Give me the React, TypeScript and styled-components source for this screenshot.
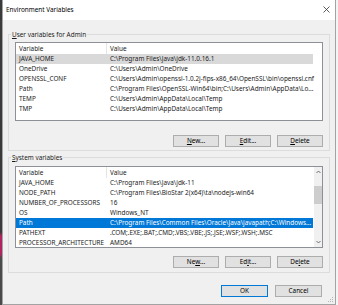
import React from "react";
import styled, { createGlobalStyle } from "styled-components";

const Global = createGlobalStyle`
  *, *::before, *::after { box-sizing: border-box; }
  html, body { margin: 0; padding: 0; background: #f7f7f7; }
  body {
    width: 338px;
    height: 305px;
    overflow: hidden;
    font-family: "Noto Sans", "Open Sans", sans-serif;
    font-size: 6.4px;
    color: #1b1b1b;
  }
`;

const FONT = 6.4;

const Frame = styled.div`
  display: flex;
  width: 338px;
  height: 305px;
`;

const DesktopEdge = styled.div`
  width: 2px;
  flex: none;
  background: linear-gradient(
    to bottom,
    #3a3a3a 0,
    #3a3a3a 232px,
    #b0245f 236px,
    #b0245f 254px,
    #4a4a4a 258px,
    #4a4a4a 100%
  );
`;

const Window = styled.div`
  position: relative;
  width: 334px;
  flex: none;
  display: flex;
  flex-direction: column;
  background: #f0f0f0;
  border-left: 1px solid #a3a3a3;
  border-right: 1px solid #a3a3a3;
  border-bottom: 1px solid #a3a3a3;
`;

const RightEdge = styled.div`
  flex: 1;
  background: #f4f4f4;
`;

const TitleBar = styled.div`
  height: 20px;
  flex: none;
  background: #ffffff;
  display: flex;
  align-items: center;
  justify-content: space-between;
  padding: 0 5px 1px 3px;
  font-size: ${FONT}px;
  color: #000;
`;

const Content = styled.div`
  flex: 1;
  display: flex;
  flex-direction: column;
  padding: 0 5px 0 5px;
`;

const GroupBox = styled.section<{ $mt: number; $pb: number }>`
  display: flex;
  flex-direction: column;
  margin-top: ${(p) => p.$mt}px;
  padding: 0 6px ${(p) => p.$pb}px;
  border: 1px solid #dcdcdc;
`;

const Legend = styled.div`
  align-self: flex-start;
  height: 11px;
  line-height: 11px;
  margin: -6px 0 0 -4px;
  padding: 0 1px;
  background: #f0f0f0;
  white-space: nowrap;
`;

const List = styled.div<{ $h: number; $mt: number }>`
  display: flex;
  height: ${(p) => p.$h}px;
  margin-top: ${(p) => p.$mt}px;
  border: 1px solid #8d9096;
  background: #ffffff;
  overflow: hidden;
`;

const ListBody = styled.div`
  flex: 1;
  min-width: 0;
  display: flex;
  flex-direction: column;
`;

const HeaderRow = styled.div`
  height: 11px;
  flex: none;
  display: grid;
  grid-template-columns: 90px 1px 1fr;
  align-items: stretch;
`;

const HeaderCell = styled.div`
  padding-left: 3px;
  line-height: 11px;
  white-space: nowrap;
`;

const ColSep = styled.div`
  background: #e5e5e5;
`;

type RowState = "none" | "inactive" | "active";

const Row = styled.div<{ $state: RowState }>`
  height: 10px;
  flex: none;
  width: 297px;
  display: grid;
  grid-template-columns: 91px 1fr;
  background: ${(p) =>
    p.$state === "active" ? "#0078d7" : p.$state === "inactive" ? "#d9d9d9" : "transparent"};
  color: ${(p) => (p.$state === "active" ? "#ffffff" : "inherit")};
`;

const Cell = styled.div`
  padding-left: 3px;
  line-height: 10px;
  white-space: nowrap;
`;

const Scrollbar = styled.div`
  width: 8px;
  flex: none;
  display: flex;
  flex-direction: column;
  background: #f0f0f0;
`;

const ScrollArrow = styled.div`
  height: 10px;
  flex: none;
  display: flex;
  align-items: center;
  justify-content: center;
`;

const Track = styled.div`
  flex: 1;
`;

const Thumb = styled.div`
  margin-top: 9px;
  height: 18px;
  background: #cdcdcd;
`;

const ButtonRow = styled.div<{ $mt: number; $gap: number; $pr?: number }>`
  display: flex;
  justify-content: flex-end;
  gap: ${(p) => p.$gap}px;
  margin-top: ${(p) => p.$mt}px;
  padding-right: ${(p) => p.$pr ?? 0}px;
`;

const Button = styled.button<{ $w: number; $primary?: boolean }>`
  width: ${(p) => p.$w}px;
  height: 12px;
  padding: 0;
  margin: 0;
  border: 1px solid ${(p) => (p.$primary ? "#0078d7" : "#adadad")};
  background: #e1e1e1;
  font-family: inherit;
  font-size: ${FONT}px;
  line-height: 10px;
  color: #000;
`;

const Grip = styled.svg`
  position: absolute;
  right: 1px;
  bottom: 1px;
`;

type Var = { name: string; value: string; state?: RowState };

const userVars: Var[] = [
  { name: "JAVA_HOME", value: "C:\\Program Files\\Java\\jdk-11.0.16.1", state: "inactive" },
  { name: "OneDrive", value: "C:\\Users\\Admin\\OneDrive" },
  {
    name: "OPENSSL_CONF",
    value: "C:\\Users\\Admin\\openssl-1.0.2j-fips-x86_64\\OpenSSL\\bin\\openssl.cnf",
  },
  { name: "Path", value: "C:\\Program Files\\OpenSSL-Win64\\bin;C:\\Users\\Admin\\AppData\\Lo..." },
  { name: "TEMP", value: "C:\\Users\\Admin\\AppData\\Local\\Temp" },
  { name: "TMP", value: "C:\\Users\\Admin\\AppData\\Local\\Temp" },
];

const systemVars: Var[] = [
  { name: "JAVA_HOME", value: "C:\\Program Files\\Java\\jdk-11" },
  { name: "NODE_PATH", value: "C:\\Program Files\\BioStar 2(x64)\\ta\\nodejs-win64" },
  { name: "NUMBER_OF_PROCESSORS", value: "16" },
  { name: "OS", value: "Windows_NT" },
  {
    name: "Path",
    value: "C:\\Program Files\\Common Files\\Oracle\\Java\\javapath;C:\\Windows...",
    state: "active",
  },
  { name: "PATHEXT", value: ".COM;.EXE;.BAT;.CMD;.VBS;.VBE;.JS;.JSE;.WSF;.WSH;.MSC" },
  { name: "PROCESSOR_ARCHITECTURE", value: "AMD64" },
];

const Chevron = ({ up }: { up: boolean }) => (
  <svg width="5" height="4" viewBox="0 0 5 4">
    <path
      d={up ? "M0.5 3 L2.5 1 L4.5 3" : "M0.5 1 L2.5 3 L4.5 1"}
      fill="none"
      stroke="#606060"
      strokeWidth="0.9"
    />
  </svg>
);

const VarList = ({
  vars,
  height,
  mt,
  scroll,
}: {
  vars: Var[];
  height: number;
  mt: number;
  scroll?: boolean;
}) => (
  <List $h={height} $mt={mt}>
    <ListBody>
      <HeaderRow>
        <HeaderCell>Variable</HeaderCell>
        <ColSep />
        <HeaderCell>Value</HeaderCell>
      </HeaderRow>
      {vars.map((v) => (
        <Row key={v.name} $state={v.state ?? "none"}>
          <Cell>{v.name}</Cell>
          <Cell>{v.value}</Cell>
        </Row>
      ))}
    </ListBody>
    {scroll && (
      <Scrollbar>
        <ScrollArrow>
          <Chevron up />
        </ScrollArrow>
        <Track>
          <Thumb />
        </Track>
        <ScrollArrow>
          <Chevron up={false} />
        </ScrollArrow>
      </Scrollbar>
    )}
  </List>
);

export default function App() {
  return (
    <>
      <Global />
      <Frame>
        <DesktopEdge />
        <Window>
          <TitleBar>
            <span>Environment Variables</span>
            <svg width="7" height="7" viewBox="0 0 7 7">
              <path d="M0.5 0.5 L6.5 6.5 M6.5 0.5 L0.5 6.5" stroke="#333" strokeWidth="0.8" />
            </svg>
          </TitleBar>
          <Content>
            <GroupBox $mt={14} $pb={3}>
              <Legend>
                <u>U</u>ser variables for Admin
              </Legend>
              <VarList vars={userVars} height={79} mt={2} />
              <ButtonRow $mt={14} $gap={6}>
                <Button $w={46}>
                  <u>N</u>ew...
                </Button>
                <Button $w={46}>
                  <u>E</u>dit...
                </Button>
                <Button $w={46}>
                  <u>D</u>elete
                </Button>
              </ButtonRow>
            </GroupBox>
            <GroupBox $mt={6} $pb={4}>
              <Legend>
                <u>S</u>ystem variables
              </Legend>
              <VarList vars={systemVars} height={82} mt={3} scroll />
              <ButtonRow $mt={8} $gap={6}>
                <Button $w={46}>
                  Ne<u>w</u>...
                </Button>
                <Button $w={46}>
                  Ed<u>i</u>t...
                </Button>
                <Button $w={46}>
                  De<u>l</u>ete
                </Button>
              </ButtonRow>
            </GroupBox>
            <ButtonRow $mt={12} $gap={7} $pr={8}>
              <Button $w={47} $primary>
                OK
              </Button>
              <Button $w={47}>Cancel</Button>
            </ButtonRow>
          </Content>
          <Grip width="6" height="6" viewBox="0 0 6 6">
            <rect x="4" y="0" width="1" height="1" fill="#b5b5b5" />
            <rect x="2" y="2" width="1" height="1" fill="#b5b5b5" />
            <rect x="4" y="2" width="1" height="1" fill="#b5b5b5" />
            <rect x="0" y="4" width="1" height="1" fill="#b5b5b5" />
            <rect x="2" y="4" width="1" height="1" fill="#b5b5b5" />
            <rect x="4" y="4" width="1" height="1" fill="#b5b5b5" />
          </Grip>
        </Window>
        <RightEdge />
      </Frame>
    </>
  );
}
